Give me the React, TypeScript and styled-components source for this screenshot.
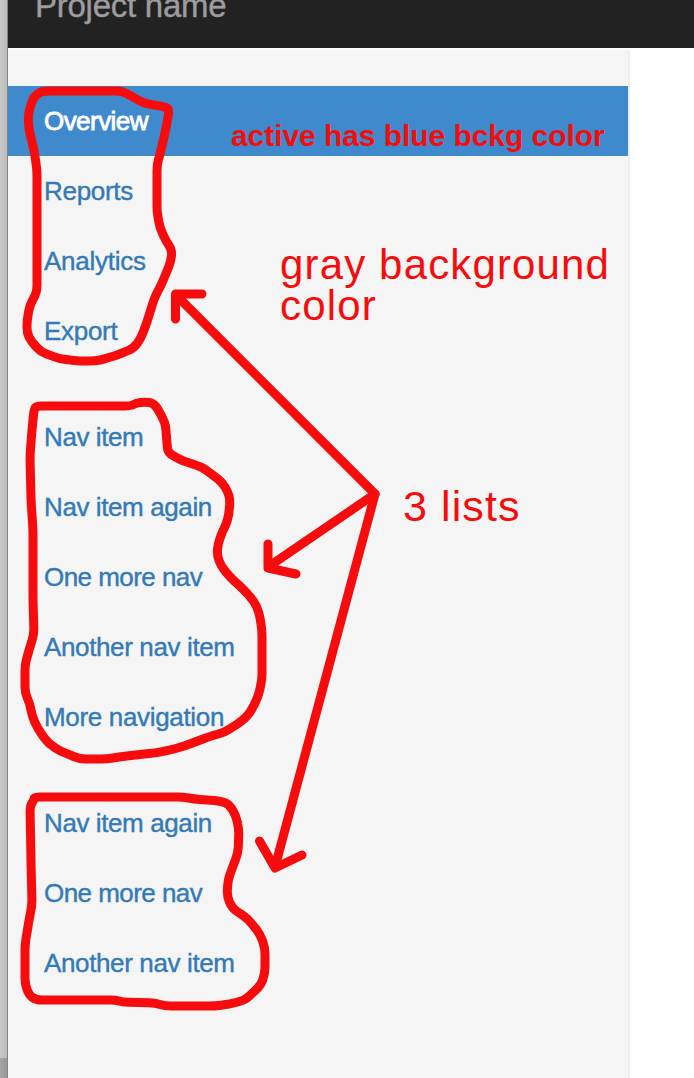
import React from 'react';
import styled, { createGlobalStyle } from 'styled-components';

const GlobalStyle = createGlobalStyle`
  * { box-sizing: border-box; }
  body {
    margin: 0;
    background: #fff;
    font-family: "Liberation Sans", Helvetica, Arial, sans-serif;
  }
`;

const Screen = styled.div`
  position: relative;
  display: flex;
  width: 694px;
  height: 1078px;
  overflow: hidden;
`;

const DesktopEdge = styled.div`
  display: flex;
  flex-direction: column;
  width: 8px;
  flex: none;
  border-right: 1px solid #858585;
  background: linear-gradient(to right, #c9c9c9, #bcbcbc);
`;

const EdgeFoot = styled.div`
  height: 20px;
  margin-top: auto;
  background: linear-gradient(to right, #a6a6a6, #989898);
`;

const Page = styled.div`
  display: flex;
  flex-direction: column;
  flex: 1;
`;

const Navbar = styled.header`
  display: flex;
  align-items: flex-end;
  height: 48px;
  padding: 0 0 23px 27px;
  margin-bottom: 2px;
  background: #222;
`;

const Brand = styled.span`
  color: #9d9d9d;
  font-size: 33px;
  line-height: 38px;
  letter-spacing: -0.25px;
  white-space: nowrap;
  -webkit-text-stroke: 0.4px #9d9d9d;
`;

const Sidebar = styled.aside`
  display: flex;
  flex-direction: column;
  flex: 1;
  gap: 36px;
  width: 622px;
  padding-top: 36px;
  background: #f5f5f5;
  border-right: 2px solid #eee;
`;

const NavList = styled.ul`
  margin: 0;
  padding: 0;
  list-style: none;
`;

const NavItem = styled.li<{ $active?: boolean; $tracking: number }>`
  height: 70px;
  padding-left: 36px;
  font-size: 26px;
  line-height: 70px;
  letter-spacing: ${(p) => p.$tracking}px;
  white-space: nowrap;
  color: ${(p) => (p.$active ? '#fff' : '#337ab7')};
  background: ${(p) => (p.$active ? '#3e8acc' : 'transparent')};
  -webkit-text-stroke: ${(p) => (p.$active ? '0.8px #fff' : '0.4px #337ab7')};
`;

const Note = styled.div<{ $x: number; $y: number; $size: number; $tracking?: number; $bold?: boolean }>`
  position: absolute;
  left: ${(p) => p.$x}px;
  top: ${(p) => p.$y}px;
  color: #f60c0c;
  font-size: ${(p) => p.$size}px;
  font-weight: ${(p) => (p.$bold ? 700 : 400)};
  line-height: 41px;
  letter-spacing: ${(p) => p.$tracking ?? 0}px;
  white-space: pre-line;
`;

const Marker = styled.svg`
  position: absolute;
  inset: 0;
  fill: none;
  stroke: #f60c0c;
  stroke-width: 9;
  stroke-linecap: round;
  stroke-linejoin: round;
`;

type Item = { label: string; tracking: number; active?: boolean };

const lists: Item[][] = [
  [
    { label: 'Overview', tracking: -0.55, active: true },
    { label: 'Reports', tracking: -0.3 },
    { label: 'Analytics', tracking: -0.27 },
    { label: 'Export', tracking: -0.3 },
  ],
  [
    { label: 'Nav item', tracking: -0.4 },
    { label: 'Nav item again', tracking: -0.4 },
    { label: 'One more nav', tracking: -0.55 },
    { label: 'Another nav item', tracking: -0.37 },
    { label: 'More navigation', tracking: -0.33 },
  ],
  [
    { label: 'Nav item again', tracking: -0.4 },
    { label: 'One more nav', tracking: -0.55 },
    { label: 'Another nav item', tracking: -0.37 },
  ],
];

const outlines = [
  '45,91 122,91 133,97 143,103 165,107 169,109 168,118 165,133 161,150 157,165 157,212 160,228 166,241 172,250 171,261 163,281 154,299 147,322 141,338 134,348 120,354 105,359 95,361 80,361 60,359 41,352 31,341 27,333 27,320 30,305 37,292 37,170 34,150 29,130 28,115 33,98 40,92',
  '36,406 131,406 136,403 145,402 153,403 158,409 165,423 166,430 167,444 168,453 183,461 202,467 222,482 228,492 230,500 229,514 226,525 223,530 218,544 217,555 221,566 230,577 243,589 254,601 259,612 262,630 262,680 258,697 250,713 242,721 225,732 208,737 190,744 175,749 155,753 125,756 107,759 80,759 60,751 48,743 38,729 32,716 30,704 25,693 25,665 29,650 34,634 33,600 33,530 31,500 30,455 32,430 34,410',
  '34,797 183,797 194,799 220,801 229,804 236,816 239,830 238,853 233,866 228,880 227,896 232,908 248,919 260,934 265,948 265,973 261,985 245,1000 230,1004 215,1006 165,1006 155,1003 122,1002 116,1000 36,1000 29,995 25,984 25,945 29,920 32,905 31,860 30,806 34,800',
];

// Closed hand-drawn loop: every corner is eased by a short curve.
function softLoop(list: string) {
  const pts = list.split(' ').map((p) => p.split(',').map(Number));
  const toward = (a: number[], b: number[]) => {
    const len = Math.hypot(b[0] - a[0], b[1] - a[1]);
    const t = Math.min(0.5, 6 / len);
    return `${(a[0] + (b[0] - a[0]) * t).toFixed(1)} ${(a[1] + (b[1] - a[1]) * t).toFixed(1)}`;
  };
  const parts = pts.map((p, i) => {
    const prev = pts[(i + pts.length - 1) % pts.length];
    const next = pts[(i + 1) % pts.length];
    return `${i ? 'L' : 'M'}${toward(p, prev)}Q${p[0]} ${p[1]} ${toward(p, next)}`;
  });
  return parts.join('') + 'Z';
}

const arrows = [
  'M375 494L176 295M202 294H175.5V319',
  'M375 494L268 567M268 544V568L296 574',
  'M375 494L275 867M259.5 841L275 868L302 855',
];

export default function App() {
  return (
    <Screen>
      <GlobalStyle />
      <DesktopEdge>
        <EdgeFoot />
      </DesktopEdge>
      <Page>
        <Navbar>
          <Brand>Project name</Brand>
        </Navbar>
        <Sidebar>
          {lists.map((items, i) => (
            <NavList key={i}>
              {items.map((item) => (
                <NavItem key={item.label} $active={item.active} $tracking={item.tracking}>
                  {item.label}
                </NavItem>
              ))}
            </NavList>
          ))}
        </Sidebar>
      </Page>
      <Marker width="694" height="1078" viewBox="0 0 694 1078">
        {outlines.map((points) => (
          <path key={points} d={softLoop(points)} />
        ))}
        {arrows.map((d) => (
          <path key={d} d={d} />
        ))}
      </Marker>
      <Note $x={231} $y={115} $size={30} $tracking={-0.06} $bold>
        active has blue bckg color
      </Note>
      <Note $x={280} $y={244} $size={42} $tracking={1.15}>
        {'gray background\ncolor'}
      </Note>
      <Note $x={403} $y={486} $size={43} $tracking={1.1}>
        3 lists
      </Note>
    </Screen>
  );
}
